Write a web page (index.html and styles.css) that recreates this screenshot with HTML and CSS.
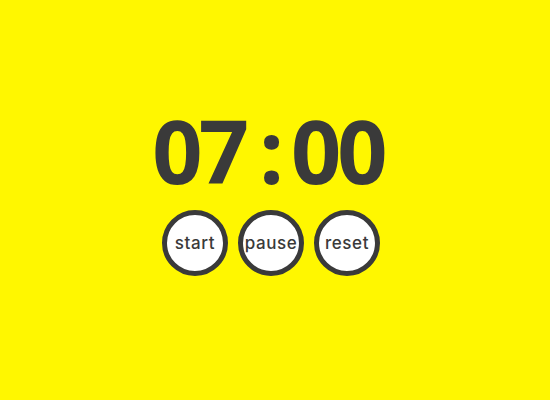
FILE: index.html
```html
<!DOCTYPE html>
<html>
<head>
<meta charset="utf-8">
<link rel="stylesheet" href="styles.css">
</head>
<body>
<main class="timer">
  <div class="clock"><span class="digits">07</span><span class="colon">:</span><span class="digits">00</span></div>
  <div class="controls">
    <button class="btn">start</button>
    <button class="btn">pause</button>
    <button class="btn">reset</button>
  </div>
</main>
</body>
</html>
```
FILE: styles.css
```css
html, body {
  margin: 0;
  height: 100%;
  background: #fff700;
}
.timer {
  height: 100%;
  display: flex;
  flex-direction: column;
  align-items: center;
  justify-content: center;
}
.clock {
  font-family: "Open Sans", sans-serif;
  font-weight: 700;
  font-size: 88px;
  line-height: 1;
  color: #3a3a3a;
  margin-top: -18px;
  display: flex;
  margin-right: 14px;
}
.digits {
  letter-spacing: -4px;
}
.colon {
  margin: 0 7px 0 14px;
}
.controls {
  display: flex;
  gap: 10px;
  margin-top: 16px;
  margin-right: 8px;
}
.btn {
  width: 66px;
  height: 66px;
  border-radius: 50%;
  border: 5px solid #3a3a3a;
  background: #fff;
  color: #3a3a3a;
  font-family: "Inter", sans-serif;
  font-weight: 500;
  font-size: 17px;
  letter-spacing: 0.6px;
  padding: 0;
  display: flex;
  align-items: center;
  justify-content: center;
}
```
